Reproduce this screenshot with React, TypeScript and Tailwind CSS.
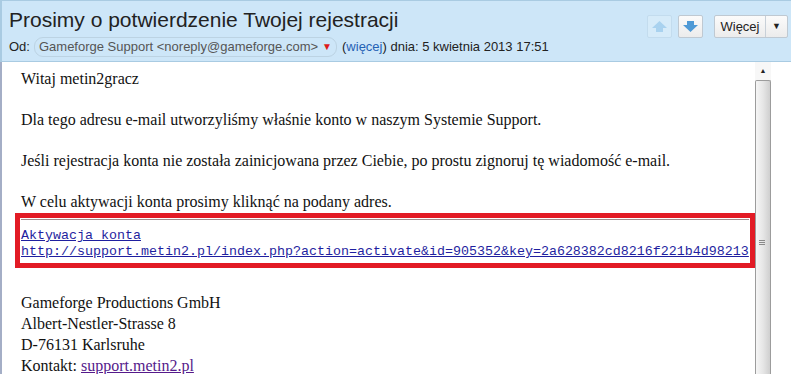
import React from "react";

const sans = { fontFamily: '"Liberation Sans", Arial, sans-serif' };
const serif = { fontFamily: '"Liberation Serif", "Times New Roman", serif' };
const mono = { fontFamily: '"Liberation Mono", "Courier New", monospace' };

function ArrowButton({ dir, disabled }: { dir: "up" | "down"; disabled?: boolean }) {
  const fill = disabled ? "#a9d2ef" : "#4f9ad6";
  return (
    <div
      className={
        "flex h-[23px] w-[25px] items-center justify-center rounded-[2px] border " +
        (disabled ? "border-[#c3dcee] bg-[#d6ebf9]" : "border-[#bfc9d2] bg-gradient-to-b from-[#fbfbfb] to-[#ececec]")
      }
    >
      <svg width="17" height="13" viewBox="0 0 17 13">
        {dir === "up" ? (
          <path d="M8.5 1 L16 8 L12 8 L12 12 L5 12 L5 8 L1 8 Z" fill={fill} />
        ) : (
          <path d="M5 1 L12 1 L12 5 L16 5 L8.5 12 L1 5 L5 5 Z" fill={fill} />
        )}
      </svg>
    </div>
  );
}

function Header() {
  return (
    <div className="flex h-[62px] shrink-0 border-t border-l-2 border-b border-[#a9cbe2] bg-[#cde6f8]" style={sans}>
      <div className="flex flex-1 flex-col pl-[7px] pt-[6px]">
        <div className="text-[21px] leading-[26px] text-[#222]">Prosimy o potwierdzenie Twojej rejestracji</div>
        <div className="mt-[4px] flex items-center text-[13px] leading-[18px] text-[#222]">
          <span>Od:</span>
          <span className="ml-[4px] flex items-center rounded-[9px] border border-[#bcd3e3] px-[4px] text-[#555]">
            Gameforge Support &lt;noreply@gameforge.com&gt;
            <span className="ml-[4px] text-[10px] text-[#dd1b1b]">▼</span>
          </span>
          <span className="ml-[5px]">
            (<span className="text-[#2461b4]">więcej</span>) dnia: 5 kwietnia 2013 17:51
          </span>
        </div>
      </div>
      <div className="flex items-start gap-[6px] pr-[3px] pt-[14px]">
        <ArrowButton dir="up" disabled />
        <ArrowButton dir="down" />
        <div className="ml-[5px] flex h-[23px] rounded-[2px] border border-[#bfc9d2] bg-gradient-to-b from-[#fbfbfb] to-[#ececec] text-[13px] text-[#222]">
          <span className="flex w-[51px] items-center justify-center border-r border-[#c8d0d8]">Więcej</span>
          <span className="flex w-[21px] items-center justify-center text-[9px]">▼</span>
        </div>
      </div>
    </div>
  );
}

function Scrollbar() {
  return (
    <div className="flex w-[16px] shrink-0 flex-col bg-[#f2f2f2]">
      <div className="flex h-[18px] items-center justify-center bg-[#f7f7f7] text-[7px] text-[#222]">▲</div>
      <div className="relative flex-1 rounded-t-[2px] border-l border-t border-r border-[#9c9c9c] bg-gradient-to-r from-[#f6f6f6] via-[#e6e6e6] to-[#cfcfcf]">
        <div className="absolute left-[3px] top-[159px] flex w-[6px] flex-col gap-[1px]">
          <div className="h-px bg-[#8a8a8a]" />
          <div className="h-px bg-[#8a8a8a]" />
          <div className="h-px bg-[#8a8a8a]" />
        </div>
      </div>
    </div>
  );
}

export default function App() {
  return (
    <div className="flex h-[374px] w-[791px] flex-col overflow-hidden bg-white">
      <Header />
      <div className="flex flex-1">
        <div className="flex-1 border-l-2 border-[#a4aec6] pl-[19px] pt-[7px] text-[16px] text-[#111]" style={serif}>
          <p className="mb-[21px] leading-[20px]">Witaj metin2gracz</p>
          <p className="mb-[21px] leading-[20px]">Dla tego adresu e-mail utworzyliśmy właśnie konto w naszym Systemie Support.</p>
          <p className="mb-[21px] leading-[20px]">Jeśli rejestracja konta nie została zainicjowana przez Ciebie, po prostu zignoruj tę wiadomość e-mail.</p>
          <p className="leading-[20px]">W celu aktywacji konta prosimy kliknąć na podany adres.</p>
          <div className="-ml-[6px] mt-[1px] w-[740px] border-[5px] border-[#e21b25] px-[1px] pb-[3px] pt-[1px]">
            <div className="border-t border-[#a08c8c] pt-[8px] text-[13.33px] leading-[16px] text-[#1f1fa0]" style={mono}>
              <div className="underline">Aktywacja konta</div>
              <div className="underline">http://support.metin2.pl/index.php?action=activate&amp;id=905352&amp;key=2a628382cd8216f221b4d98213</div>
            </div>
          </div>
          <div className="mt-[24px] leading-[21px]">
            <div>Gameforge Productions GmbH</div>
            <div>Albert-Nestler-Strasse 8</div>
            <div>D-76131 Karlsruhe</div>
            <div>
              Kontakt: <span className="text-[#551a8b] underline">support.metin2.pl</span>
            </div>
          </div>
        </div>
        <Scrollbar />
        <div className="w-[21px] shrink-0" />
      </div>
    </div>
  );
}
